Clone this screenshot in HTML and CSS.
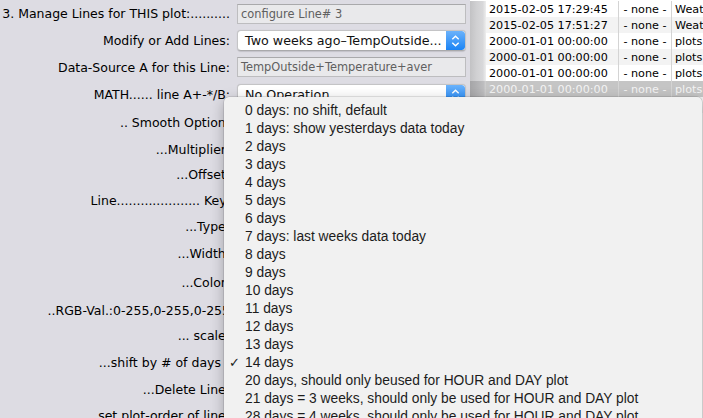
FILE: index.html
```html
<!DOCTYPE html>
<html>
<head>
<meta charset="utf-8">
<link rel="stylesheet" href="styles.css">
</head>
<body>
<div class="window">
  <div class="form">
    <div class="row"><div class="label"><span>3. Manage Lines for THIS plot:..........</span></div><div class="field">configure Line# 3</div></div>
    <div class="row"><div class="label"><span>Modify or Add Lines:</span></div>
      <div class="popup"><span class="popup-text">Two weeks ago–TempOutside...</span>
        <span class="stepper"><svg width="19" height="20" viewBox="0 0 19 20"><path d="M6.3 8.3 L9.5 5.2 L12.7 8.3 M6.3 11.7 L9.5 14.8 L12.7 11.7" fill="none" stroke="#fff" stroke-width="1.4"/></svg></span></div></div>
    <div class="row"><div class="label"><span>Data-Source A for this Line:</span></div><div class="field">TempOutside+Temperature+aver</div></div>
    <div class="row"><div class="label"><span>MATH...... line A+-*/B:</span></div>
      <div class="popup"><span class="popup-text">No Operation</span>
        <span class="stepper"><svg width="19" height="20" viewBox="0 0 19 20"><path d="M6.3 8.3 L9.5 5.2 L12.7 8.3 M6.3 11.7 L9.5 14.8 L12.7 11.7" fill="none" stroke="#fff" stroke-width="1.4"/></svg></span></div></div>
    <div class="row"><div class="label"><span>.. Smooth Option:</span></div></div>
    <div class="row"><div class="label"><span>...Multiplier:</span></div></div>
    <div class="row"><div class="label"><span>...Offset:</span></div></div>
    <div class="row"><div class="label"><span>Line..................... Key:</span></div></div>
    <div class="row"><div class="label"><span>...Type:</span></div></div>
    <div class="row"><div class="label"><span>...Width:</span></div></div>
    <div class="row"><div class="label"><span>...Color:</span></div></div>
    <div class="row"><div class="label"><span>..RGB-Val.:0-255,0-255,0-255</span></div></div>
    <div class="row"><div class="label"><span>... scale:</span></div></div>
    <div class="row"><div class="label label-shift"><span>...shift by # of days</span></div></div>
    <div class="row"><div class="label"><span>...Delete Line:</span></div></div>
    <div class="row"><div class="label"><span>set plot-order of line:</span></div></div>
  </div>

  <div class="table">
    <div class="trow"><div class="gutter"></div><div class="cell date">2015-02-05 17:29:45</div><div class="cell none">- none -</div><div class="cell src">Weather</div></div>
    <div class="trow alt"><div class="gutter"></div><div class="cell date">2015-02-05 17:51:27</div><div class="cell none">- none -</div><div class="cell src">Weather</div></div>
    <div class="trow"><div class="gutter"></div><div class="cell date">2000-01-01 00:00:00</div><div class="cell none">- none -</div><div class="cell src">plots</div></div>
    <div class="trow alt"><div class="gutter"></div><div class="cell date">2000-01-01 00:00:00</div><div class="cell none">- none -</div><div class="cell src">plots</div></div>
    <div class="trow"><div class="gutter"></div><div class="cell date">2000-01-01 00:00:00</div><div class="cell none">- none -</div><div class="cell src">plots</div></div>
    <div class="trow selected"><div class="gutter"></div><div class="cell date">2000-01-01 00:00:00</div><div class="cell none">- none -</div><div class="cell src">plots</div></div>
    <div class="trow alt"><div class="gutter"></div><div class="cell date"></div><div class="cell none"></div><div class="cell src"></div></div>
  </div>

  <div class="menu">
    <div class="item"><span class="check"></span><span>0 days: no shift, default</span></div>
    <div class="item"><span class="check"></span><span>1 days: show yesterdays data today</span></div>
    <div class="item"><span class="check"></span><span>2 days</span></div>
    <div class="item"><span class="check"></span><span>3 days</span></div>
    <div class="item"><span class="check"></span><span>4 days</span></div>
    <div class="item"><span class="check"></span><span>5 days</span></div>
    <div class="item"><span class="check"></span><span>6 days</span></div>
    <div class="item"><span class="check"></span><span>7 days: last weeks data today</span></div>
    <div class="item"><span class="check"></span><span>8 days</span></div>
    <div class="item"><span class="check"></span><span>9 days</span></div>
    <div class="item"><span class="check"></span><span>10 days</span></div>
    <div class="item"><span class="check"></span><span>11 days</span></div>
    <div class="item"><span class="check"></span><span>12 days</span></div>
    <div class="item"><span class="check"></span><span>13 days</span></div>
    <div class="item"><span class="check">✓</span><span>14 days</span></div>
    <div class="item"><span class="check"></span><span>20 days, should only beused for HOUR and DAY plot</span></div>
    <div class="item"><span class="check"></span><span>21 days = 3 weeks, should only be used for HOUR and DAY plot</span></div>
    <div class="item"><span class="check"></span><span>28 days = 4 weeks, should only be used for HOUR and DAY plot</span></div>
  </div>
</div>
</body>
</html>
```

FILE: styles.css
```css
html, body {
  margin: 0;
  padding: 0;
  background: #dddce3;
}

.window {
  position: relative;
  width: 703px;
  height: 418px;
  overflow: hidden;
  display: flex;
  background: #dddce3;
  font-family: "DejaVu Sans", "Liberation Sans", sans-serif;
  color: #000;
}

.form {
  width: 470px;
  flex: none;
  display: grid;
  grid-template-rows: 27px 27px 26px 28px 28px 26px 25px 26px 26px 29px 29px 26px 25px 28px 26px 26px;
  align-content: start;
}

.row {
  display: grid;
  grid-template-columns: 237px 229px;
  align-items: center;
}

.label {
  display: flex;
  justify-content: flex-end;
  font-size: 12.5px;
  padding-right: 7px;
  white-space: nowrap;
  overflow: hidden;
}

.label span {
  flex: none;
}

.label-shift {
  padding-right: 16px;
}

.field {
  box-sizing: border-box;
  height: 20px;
  border: 1px solid #bdbdbf;
  border-top-color: #a9a9ab;
  background: #e9e9eb;
  padding: 0 3px;
  font-size: 11.4px;
  line-height: 18px;
  color: #606060;
  white-space: nowrap;
  overflow: hidden;
}

.popup {
  box-sizing: border-box;
  height: 21px;
  display: flex;
  align-items: center;
  background: #fff;
  border: 1px solid #c4c4c6;
  border-bottom-color: #a9a9ab;
  border-radius: 4px;
  box-shadow: 0 0.5px 1px rgba(0, 0, 0, 0.12);
  overflow: hidden;
}

.popup-text {
  flex: 1;
  padding-left: 7px;
  font-size: 12.7px;
  color: #111;
  white-space: nowrap;
  overflow: hidden;
}

.stepper {
  width: 19px;
  height: 19px;
  flex: none;
  display: flex;
  background: linear-gradient(#6bb2fb, #1b84f5);
  border-radius: 0 3px 3px 0;
}

.stepper svg {
  display: block;
}

.table {
  flex: 1;
  background: #fff;
  padding-top: 1px;
  display: flex;
  flex-direction: column;
  font-size: 11.2px;
}

.trow {
  height: 16px;
  display: grid;
  grid-template-columns: 16px 133px 53px 1fr;
  background: #fff;
  line-height: 17px;
}

.trow.alt {
  background: #f3f3f3;
}

.trow.selected {
  background: #c5c5c5;
  color: #f4f4f4;
}

.gutter {
  background: linear-gradient(to right, #c2c2c4 0%, #d0d0d2 40%, #d8d8da 80%, #eeeeee 100%);
}

.trow.selected .gutter {
  background: linear-gradient(to right, #a5a5a7 0%, #b2b2b4 50%, #bdbdbf 85%, #d0d0d0 100%);
}

.cell {
  white-space: nowrap;
  overflow: hidden;
  border-right: 1px solid #d4d4d4;
}

.date {
  padding-left: 3px;
}

.none {
  text-align: center;
}

.src {
  border-right: none;
  padding-left: 3px;
}

.menu {
  position: absolute;
  left: 224px;
  top: 97px;
  width: 478px;
  height: 360px;
  box-sizing: border-box;
  padding-top: 5px;
  background: #f1f1f1;
  border-radius: 5px;
  box-shadow: 0 0 0 0.5px rgba(0, 0, 0, 0.18), 0 4px 14px rgba(0, 0, 0, 0.28);
  font-family: "Liberation Sans", Arial, sans-serif;
  font-size: 13.8px;
  color: #1c1c1c;
}

.item {
  height: 18px;
  line-height: 18px;
  display: flex;
  white-space: nowrap;
}

.check {
  width: 16px;
  padding-left: 5px;
  flex: none;
  font-family: "DejaVu Sans", sans-serif;
  font-size: 13px;
}
```
